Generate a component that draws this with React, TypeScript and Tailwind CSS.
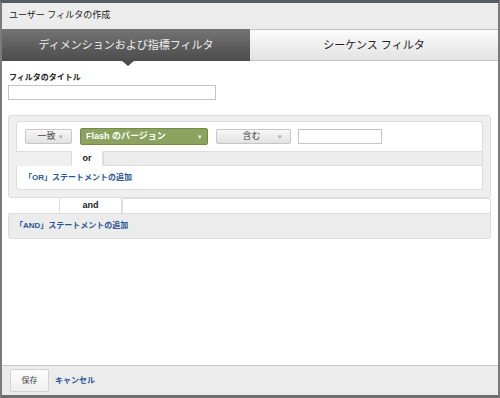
import React from "react"

const jp = { fontFamily: '"Liberation Sans", "Noto Sans CJK JP", sans-serif' }

const GrayButton = ({ label, width }: { label: string; width: string }) => {
  return (
    <div
      className={`${width} h-[15px] flex items-center justify-between rounded-[2px] border border-[#c6c6c6] bg-gradient-to-b from-[#f7f7f7] to-[#e2e2e2] px-2`}
    >
      <span className="flex-1 text-center text-[9px] leading-none text-[#444]">{label}</span>
      <span className="text-[7px] leading-none text-[#aaa]">▾</span>
    </div>
  )
}

const App = () => {
  return (
    <div
      style={jp}
      className="w-[500px] h-[398px] flex flex-col border-x-2 border-t-[3px] border-b-[3px] border-x-[#7b7b7b] border-t-[#565c63] border-b-[#6e6e6e] bg-white"
    >
      {/* title */}
      <div className="h-[26px] shrink-0 flex items-center px-[7px] bg-[#ececec] text-[9px] text-[#222]">
        ユーザー フィルタの作成
      </div>

      {/* tabs */}
      <div className="h-[32px] shrink-0 flex relative">
        <div className="w-[248px] flex items-center justify-center bg-gradient-to-b from-[#747474] to-[#4c4c4c] text-[#f0f0f0] text-[11px]">
          ディメンションおよび指標フィルタ
        </div>
        <div className="flex-1 flex items-center justify-center bg-gradient-to-b from-[#fbfbfb] to-[#e3e3e3] border-y border-[#c4c4c4] text-[#222] text-[11px]">
          シーケンス フィルタ
        </div>
        <div className="absolute left-[120px] top-[32px] w-0 h-0 border-x-[6px] border-x-transparent border-t-[5px] border-t-[#4c4c4c]" />
      </div>

      {/* content */}
      <div className="flex-1 flex flex-col pt-[12px]">
        <div className="px-[7px] text-[8px] font-bold text-[#222] leading-[10px]">フィルタのタイトル</div>
        <div className="mx-[6px] mt-[2px] w-[208px] h-[15px] border border-[#c4c4c4] bg-white" />

        {/* OR panel */}
        <div className="mt-[15px] ml-[6px] mr-[7px] rounded-[3px] border border-[#dcdcdc] bg-[#efefef] px-[7px] pt-[5px] pb-[7px]">
          <div className="h-[30px] flex items-center gap-[8px] px-[8px] rounded-t-[3px] border-x border-t border-[#dcdcdc] bg-white">
            <GrayButton label="一致" width="w-[47px]" />
            <div className="w-[128px] h-[17px] flex items-center justify-between rounded-[2px] border border-[#738a4a] bg-[#8ca25f] px-[5px]">
              <span className="text-[9px] font-bold leading-none text-white">Flash のバージョン</span>
              <span className="text-[7px] leading-none text-[#e6eedb]">▾</span>
            </div>
            <GrayButton label="含む" width="w-[75px]" />
            <div className="w-[84px] h-[15px] -ml-[1px] border border-[#c4c4c4] bg-white" />
          </div>
          <div className="h-[15px] flex">
            <div className="w-[55px] border-t border-[#dcdcdc]" />
            <div className="w-[32px] flex items-center justify-center bg-white border-x border-[#dcdcdc] text-[9px] font-bold text-[#222]">
              or
            </div>
            <div className="flex-1 border border-[#dcdcdc] bg-[#ededed] rounded-[2px]" />
          </div>
          <div className="h-[24px] flex items-center px-[7px] rounded-b-[3px] border-x border-b border-[#dcdcdc] bg-white text-[8px] font-bold text-[#2a5699]">
            「OR」ステートメントの追加
          </div>
        </div>

        {/* and row */}
        <div className="h-[15px] flex ml-[6px] mr-[7px]">
          <div className="w-[51px]" />
          <div className="w-[63px] flex items-center justify-center bg-white border-x border-[#dcdcdc] text-[9px] font-bold text-[#222]">
            and
          </div>
          <div className="flex-1 border-t border-x border-[#dcdcdc] rounded-t-[2px]" />
        </div>

        {/* AND panel */}
        <div className="h-[26px] ml-[6px] mr-[7px] flex items-center px-[6px] rounded-b-[3px] border border-[#dcdcdc] bg-[#ececec] text-[8px] font-bold text-[#2a5699]">
          「AND」ステートメントの追加
        </div>
      </div>

      {/* footer */}
      <div className="h-[30px] shrink-0 flex items-center gap-[6px] px-[8px] border-t border-[#c8c8c8] bg-[#ececec]">
        <div className="w-[39px] h-[23px] flex items-center justify-center rounded-[2px] border border-[#d2d2d2] bg-gradient-to-b from-[#fdfdfd] to-[#efefef] text-[8px] text-[#444]">
          保存
        </div>
        <span className="text-[8px] font-bold text-[#2a5699]">キャンセル</span>
      </div>
    </div>
  )
}

export default App
